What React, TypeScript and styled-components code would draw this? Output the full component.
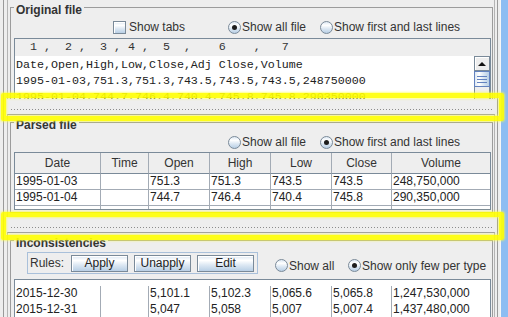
import React from "react";
import styled, { createGlobalStyle } from "styled-components";

const DARK = "#7a8a99";
const GRID = "#a3abb5";
const GRAD =
  "linear-gradient(to bottom, #dde8f3 0%, #ffffff 30%, #dde8f3 60%, #b8cfe5 100%)";
const MONO = `"Liberation Mono", "Courier New", monospace`;

const GlobalStyle = createGlobalStyle`
  html, body { margin: 0; padding: 0; background: #eeeeee; }
  body { font-family: "Liberation Sans", Arial, sans-serif; font-size: 12px; color: #333333; }
  *, *::before, *::after { box-sizing: border-box; }
`;

const Frame = styled.div`
  position: relative;
  display: flex;
  width: 508px;
  height: 317px;
  overflow: hidden;
  background: #eeeeee;
`;

const Main = styled.div`
  flex: 0 0 500px;
  height: 100%;
`;

const WindowEdge = styled.div`
  flex: 1;
  background: #8dbdf2;
  border-left: 1px solid #f6f6f6;
`;

const Split = styled.div`
  margin-left: 3px;
  width: 495px;
  height: 100%;
  display: flex;
  flex-direction: column;
  border-left: 1px solid #9a9a9a;
  border-right: 1px solid #9a9a9a;
  padding: 0 2px 0 3px;
`;

const Pane = styled.div<{ $h?: number; $top?: boolean }>`
  flex: ${(p) => (p.$h ? `0 0 ${p.$h}px` : "1 1 auto")};
  overflow: hidden;
  border-left: 1px solid #b4b4b4;
  border-right: 1px solid #b4b4b4;
  border-top: ${(p) => (p.$top ? "1px solid #a0a0a0" : "none")};
  padding: 0 1px 0 2px;
`;

const Divider = styled.div`
  flex: 0 0 15px;
  margin: 0 3px;
  background-image: linear-gradient(to right, #8c8c8c 0 1px, transparent 1px);
  background-size: 3px 1px;
  background-repeat: repeat-x;
  background-position: 1px 10px;
`;

const Titled = styled.div`
  margin-top: 7px;
  border: 1px solid #9c9c9c;
  padding: 0 1px 2px 3px;
`;

const Title = styled.div`
  width: fit-content;
  margin-top: -5px;
  padding: 0 2px;
  background: #eeeeee;
  font-weight: bold;
  font-size: 12px;
  line-height: 14px;
  color: #333333;
`;

const OptionsRow = styled.div<{ $pl?: number; $mt?: number; $h?: number }>`
  display: flex;
  align-items: center;
  height: ${(p) => p.$h ?? 16}px;
  margin-top: ${(p) => p.$mt ?? 2}px;
  padding-left: ${(p) => p.$pl ?? 0}px;
`;

const Option = styled.div<{ $w?: number; $gap?: number }>`
  display: flex;
  align-items: center;
  flex: none;
  gap: ${(p) => p.$gap ?? 1}px;
  width: ${(p) => (p.$w ? `${p.$w}px` : "auto")};
  white-space: nowrap;
  line-height: 16px;
  color: #333333;
`;

const CheckBox = styled.span`
  flex: none;
  width: 13px;
  height: 13px;
  border: 1px solid ${DARK};
  background: ${GRAD};
  box-shadow: inset 1px 1px #ffffff;
`;

const RadioDot = styled.span<{ $on?: boolean }>`
  flex: none;
  width: 13px;
  height: 13px;
  border-radius: 50%;
  border: 1px solid ${DARK};
  background: ${GRAD};
  display: flex;
  align-items: center;
  justify-content: center;
  &::after {
    content: "";
    width: 5px;
    height: 5px;
    border-radius: 50%;
    background: #1c1c1c;
    display: ${(p) => (p.$on ? "block" : "none")};
  }
`;

const TextScroll = styled.div`
  margin-top: 3px;
  height: 80px;
  border: 1px solid ${DARK};
  display: flex;
  flex-direction: column;
  background: #ffffff;
`;

const Ruler = styled.div`
  flex: 0 0 17px;
  background: #eeeeee;
  padding-left: 1px;
  font-family: ${MONO};
  font-size: 11.67px;
  line-height: 17px;
  white-space: pre;
  color: #333333;
`;

const TextBody = styled.div`
  flex: 1;
  display: flex;
`;

const Lines = styled.div`
  flex: 1;
  padding: 1px 0 0 1px;
  font-family: ${MONO};
  font-size: 11.67px;
  line-height: 16px;
  white-space: pre;
  color: #222222;
  overflow: hidden;
`;

const VScroll = styled.div`
  flex: 0 0 16px;
  display: flex;
  flex-direction: column;
`;

const ScrollBtn = styled.div`
  flex: 0 0 15px;
  border: 1px solid ${DARK};
  background: #eeeeee;
  box-shadow: inset 1px 1px #ffffff;
  display: flex;
  align-items: center;
  justify-content: center;
`;

const Thumb = styled.div`
  flex: 0 0 16px;
  border: 1px solid #6382bf;
  background: linear-gradient(to right, #dde8f3 0%, #ffffff 30%, #dde8f3 60%, #b8cfe5 100%);
  display: flex;
  align-items: center;
  justify-content: center;
`;

const Grip = styled.span`
  width: 10px;
  height: 7px;
  background: repeating-linear-gradient(to bottom, #6382bf 0 1px, transparent 1px 3px);
`;

const Track = styled.div`
  flex: 1;
  background: #eeeeee;
  border-left: 1px solid ${DARK};
  border-right: 1px solid ${DARK};
`;

const COLS = "86px 48px 61px 61px 61px 60px 98px";

const TableBox = styled.div<{ $mt: number; $h: number; $pt?: number }>`
  margin-top: ${(p) => p.$mt}px;
  height: ${(p) => p.$h}px;
  padding-top: ${(p) => p.$pt ?? 0}px;
  border: 1px solid ${DARK};
  background: #ffffff;
  overflow: hidden;
`;

const Row = styled.div`
  display: grid;
  grid-template-columns: ${COLS};
`;

const HeadCell = styled.div<{ $last?: boolean }>`
  height: 21px;
  padding-top: 1px;
  line-height: 19px;
  text-align: center;
  background: #eeeeee;
  border-right: ${(p) => (p.$last ? "none" : `1px solid ${GRID}`)};
  border-bottom: 1px solid ${DARK};
  color: #333333;
  white-space: nowrap;
`;

const Cell = styled.div<{ $last?: boolean; $hline?: boolean }>`
  height: 16px;
  padding: 0 1px;
  line-height: 15px;
  border-right: ${(p) => (p.$last ? "none" : `1px solid ${GRID}`)};
  border-bottom: ${(p) => (p.$hline ? `1px solid ${GRID}` : "none")};
  color: #222222;
  white-space: nowrap;
  overflow: hidden;
`;

const Toolbar = styled.div`
  flex: none;
  display: flex;
  align-items: center;
  width: 231px;
  height: 22px;
  margin-left: 13px;
  padding: 0 3px 0 2px;
  border: 1px solid #a9c0da;
`;

const ToolLabel = styled.span`
  width: 41px;
  line-height: 16px;
  color: #333333;
`;

const Btn = styled.div<{ $ml?: number }>`
  width: 57px;
  height: 17px;
  margin-left: ${(p) => p.$ml ?? 0}px;
  border: 1px solid ${DARK};
  background: ${GRAD};
  box-shadow: inset 1px 1px #ffffff;
  text-align: center;
  line-height: 15px;
  color: #222222;
`;

const RadioGroup = styled.div`
  display: flex;
  align-items: center;
  margin-left: 17px;
  padding-top: 5px;
`;

const Highlight = styled.div<{ $top: number }>`
  position: absolute;
  left: 1px;
  top: ${(p) => p.$top}px;
  width: 503px;
  height: 28px;
  border: 5px solid rgba(255, 255, 0, 0.9);
  border-radius: 2px;
  box-shadow: 0 0 2px 1px rgba(255, 255, 60, 0.6),
    inset 0 0 2px 1px rgba(255, 255, 60, 0.6);
  pointer-events: none;
`;

const RULER = "  1 ,  2 ,  3 , 4 ,  5  ,    6    ,   7";
const LINES = [
  "Date,Open,High,Low,Close,Adj Close,Volume",
  "1995-01-03,751.3,751.3,743.5,743.5,743.5,248750000",
  "1995-01-04,744.7,746.4,740.4,745.8,745.8,290350000",
];

const HEADERS = ["Date", "Time", "Open", "High", "Low", "Close", "Volume"];
const PARSED = [
  ["1995-01-03", "", "751.3", "751.3", "743.5", "743.5", "248,750,000"],
  ["1995-01-04", "", "744.7", "746.4", "740.4", "745.8", "290,350,000"],
  ["", "", "", "", "", "", ""],
];
const INCONS = [
  ["2015-12-30", "", "5,101.1", "5,102.3", "5,065.6", "5,065.8", "1,247,530,000"],
  ["2015-12-31", "", "5,047", "5,058", "5,007", "5,007.4", "1,437,480,000"],
  ["", "", "", "", "", "", ""],
];

function UpArrow() {
  return (
    <svg width="8" height="4" viewBox="0 0 8 4">
      <polygon points="0,4 4,0 8,4" fill="#111" />
    </svg>
  );
}

export default function App() {
  return (
    <>
      <GlobalStyle />
      <Frame>
        <Main>
          <Split>
            <Pane $h={99}>
              <Titled>
                <Title>Original file</Title>
                <OptionsRow $pl={99}>
                  <Option $w={115} $gap={3}>
                    <CheckBox />
                    <span>Show tabs</span>
                  </Option>
                  <Option $w={92}>
                    <RadioDot $on />
                    <span>Show all file</span>
                  </Option>
                  <Option>
                    <RadioDot />
                    <span>Show first and last lines</span>
                  </Option>
                </OptionsRow>
                <TextScroll>
                  <Ruler>{RULER}</Ruler>
                  <TextBody>
                    <Lines>{LINES.join("\n")}</Lines>
                    <VScroll>
                      <ScrollBtn>
                        <UpArrow />
                      </ScrollBtn>
                      <Thumb>
                        <Grip />
                      </Thumb>
                      <Track />
                    </VScroll>
                  </TextBody>
                </TextScroll>
              </Titled>
            </Pane>
            <Divider />
            <Pane $h={103} $top>
              <Titled>
                <Title>Parsed file</Title>
                <OptionsRow $pl={214}>
                  <Option $w={92}>
                    <RadioDot />
                    <span>Show all file</span>
                  </Option>
                  <Option>
                    <RadioDot $on />
                    <span>Show first and last lines</span>
                  </Option>
                </OptionsRow>
                <TableBox $mt={2} $h={58}>
                  <Row>
                    {HEADERS.map((h, i) => (
                      <HeadCell key={h} $last={i === HEADERS.length - 1}>
                        {h}
                      </HeadCell>
                    ))}
                  </Row>
                  {PARSED.map((r, ri) => (
                    <Row key={ri}>
                      {r.map((c, i) => (
                        <Cell key={i} $hline $last={i === r.length - 1}>
                          {c}
                        </Cell>
                      ))}
                    </Row>
                  ))}
                </TableBox>
              </Titled>
            </Pane>
            <Divider />
            <Pane $top>
              <Titled>
                <Title>Inconsistencies</Title>
                <OptionsRow $mt={2} $h={22}>
                  <Toolbar>
                    <ToolLabel>Rules:</ToolLabel>
                    <Btn>Apply</Btn>
                    <Btn $ml={6}>Unapply</Btn>
                    <Btn $ml={6}>Edit</Btn>
                  </Toolbar>
                  <RadioGroup>
                    <Option $w={73}>
                      <RadioDot />
                      <span>Show all</span>
                    </Option>
                    <Option>
                      <RadioDot $on />
                      <span>Show only few per type</span>
                    </Option>
                  </RadioGroup>
                </OptionsRow>
                <TableBox $mt={5} $h={60} $pt={6}>
                  {INCONS.map((r, ri) => (
                    <Row key={ri}>
                      {r.map((c, i) => (
                        <Cell key={i} $last={i === r.length - 1}>
                          {c}
                        </Cell>
                      ))}
                    </Row>
                  ))}
                </TableBox>
              </Titled>
            </Pane>
          </Split>
        </Main>
        <WindowEdge />
        <Highlight $top={93} />
        <Highlight $top={212} />
      </Frame>
    </>
  );
}
